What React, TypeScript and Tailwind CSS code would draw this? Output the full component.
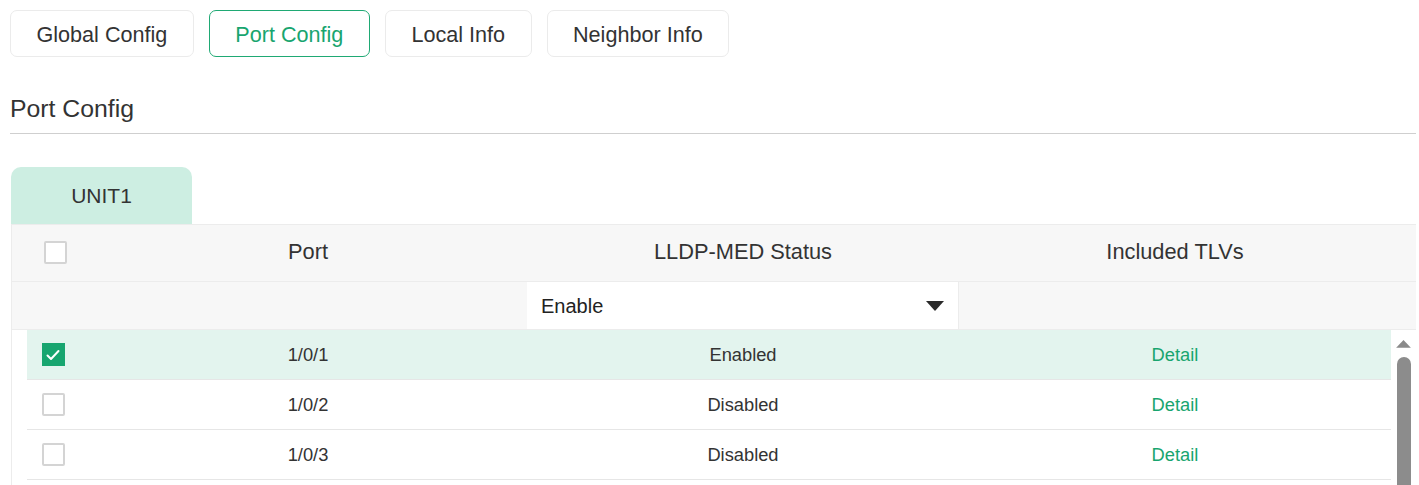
import React from "react";

const rows = [
  { port: "1/0/1", status: "Enabled", checked: true },
  { port: "1/0/2", status: "Disabled", checked: false },
  { port: "1/0/3", status: "Disabled", checked: false },
];

function Box({ checked }: { checked?: boolean }) {
  if (checked) {
    return (
      <div className="w-[23px] h-[23px] bg-[#17a56f] flex items-center justify-center">
        <svg width="14" height="12" viewBox="0 0 14 12" fill="none">
          <path d="M1.5 6.5 L5 10 L12.5 2" stroke="#fff" strokeWidth="2" strokeLinecap="round" strokeLinejoin="round" />
        </svg>
      </div>
    );
  }
  return <div className="w-[23px] h-[23px] bg-white border-2 border-[#d4d4d4] rounded-[2px]" />;
}

export default function App() {
  const tabs = ["Global Config", "Port Config", "Local Info", "Neighbor Info"];
  return (
    <div className="w-[1419px] h-[485px] overflow-hidden bg-white text-[#333] pl-[10px] pr-[3px] pt-[10px] font-['Liberation_Sans',Arimo,Arial,sans-serif]">
      <div className="flex gap-[15px]">
        {tabs.map((t) => {
          const active = t === "Port Config";
          return (
            <div
              key={t}
              className={
                "h-[47px] px-[25.5px] pt-[3px] flex items-center rounded-[7px] border text-[21.6px] " +
                (active ? "border-[#1fa974] text-[#18a56f]" : "border-[#ebebeb] text-[#333]")
              }
            >
              {t}
            </div>
          );
        })}
      </div>

      <div className="mt-[28px] h-[49px] flex items-center border-b border-[#cfcfcf] text-[24.8px] text-[#333]">
        Port Config
      </div>

      <div className="mt-[33px] ml-[1px] w-[181px] h-[57px] rounded-t-[10px] bg-[#cdeee2] flex items-center justify-center text-[21px] text-[#333]">
        UNIT1
      </div>

      <div className="ml-[1px] border-l border-t border-[#ececec]">
        <div className="grid grid-cols-[77px_438px_432px_432px_25px] h-[57px] pb-[1px] bg-[#f7f7f7] border-b border-[#ececec] items-center text-[21.8px]">
          <div className="pl-[32px]">
            <Box />
          </div>
          <div className="text-center">Port</div>
          <div className="text-center">LLDP-MED Status</div>
          <div className="text-center">Included TLVs</div>
          <div />
        </div>
        <div className="grid grid-cols-[77px_438px_432px_432px_25px] h-[48px] bg-[#f7f7f7] border-b border-[#ececec]">
          <div />
          <div />
          <div className="bg-white border-r border-[#ececec] flex items-center justify-between pl-[14px] pr-[14px] text-[20px] text-[#222]">
            <span>Enable</span>
            <svg width="18" height="10" viewBox="0 0 18 10">
              <path d="M0 0 L18 0 L9 10 Z" fill="#2a2a2a" />
            </svg>
          </div>
          <div />
          <div />
        </div>
        <div className="flex h-[200px]">
          <div className="w-[15px]" />
          <div className="w-[1365px]">
            {rows.map((r) => (
              <div
                key={r.port}
                className={
                  "grid grid-cols-[62px_438px_432px_432px] h-[50px] border-b border-[#e6e6e6] items-center text-[18.3px] " +
                  (r.checked ? "bg-[#e3f4ee]" : "bg-white")
                }
              >
                <div className="pl-[15px]">
                  <Box checked={r.checked} />
                </div>
                <div className="text-center text-[#333]">{r.port}</div>
                <div className="text-center text-[#333]">{r.status}</div>
                <div className="text-center text-[#18a56f]">Detail</div>
              </div>
            ))}
          </div>
          <div className="w-[25px] flex flex-col items-center pt-[10px]">
            <svg width="17" height="9" viewBox="0 0 17 9">
              <path d="M0 9 L8.5 0 L17 9 Z" fill="#8a8a8a" />
            </svg>
            <div className="mt-[9px] w-[14px] h-[200px] rounded-full bg-[#8c8c8c]" />
          </div>
        </div>
      </div>
    </div>
  );
}
